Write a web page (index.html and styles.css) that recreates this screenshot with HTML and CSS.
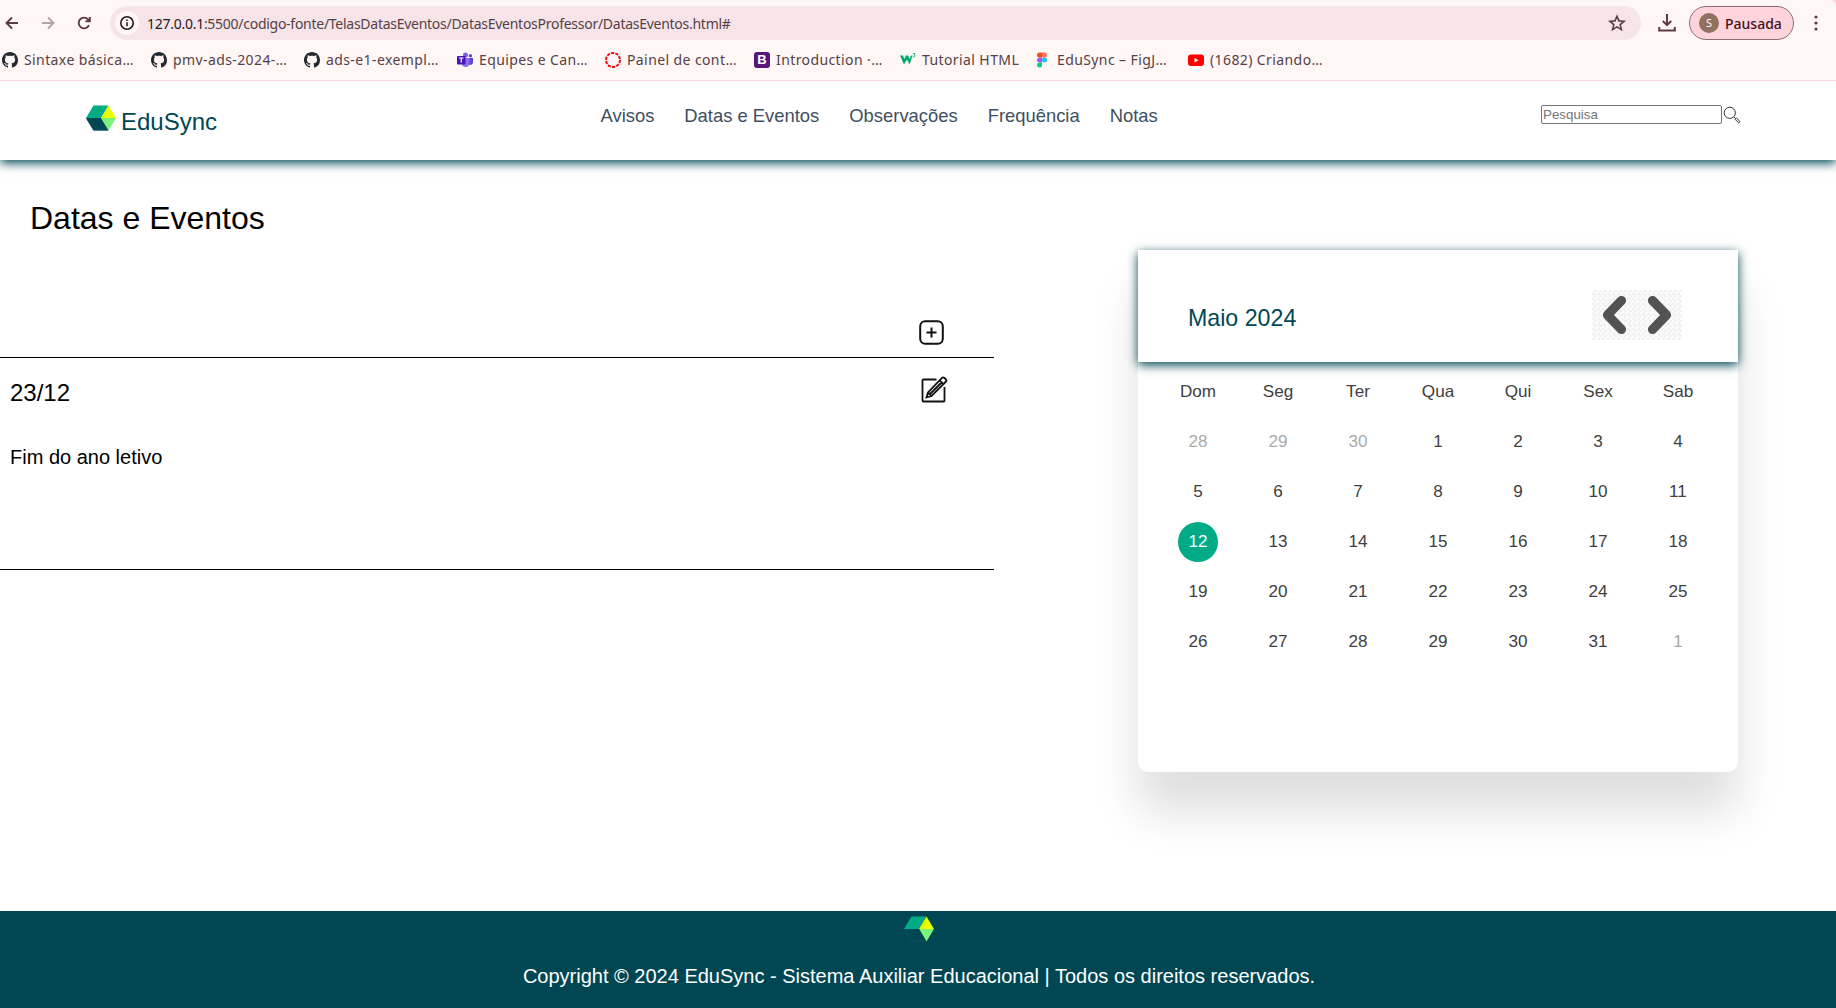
FILE: index.html
```html
<!DOCTYPE html>
<html lang="pt-BR">
<head>
<meta charset="utf-8">
<title>EduSync</title>
<link rel="stylesheet" href="styles.css">
</head>
<body>
<svg class="defs" width="0" height="0">
  <symbol id="logo" viewBox="0 0 30 26">
    <path d="M0 13 7.5.5h15L15 13z" fill="#00ab86"/>
    <path d="M22.5.5 30 13H15z" fill="#e9ff00"/>
    <path d="M15 13h15l-7.5 12.5z" fill="#7af57a"/>
    <path d="M0 13h15l7.5 12.500H7.500z" fill="#004753"/>
    <path class="logo-edge" d="M.5 13.500 7.500 25h14.500"/>
  </symbol>
  <symbol id="github" viewBox="0 0 16 16">
    <path fill="#24292f" d="M8 0C3.580 0 0 3.580 0 8c0 3.540 2.290 6.530 5.470 7.590.4.070.55-.17.55-.38 0-.19-.01-.82-.01-1.490-2.010.37-2.530-.49-2.690-.94-.09-.23-.48-.94-.82-1.130-.28-.15-.68-.52-.01-.53.63-.01 1.080.58 1.230.82.72 1.210 1.870.87 2.330.66.07-.52.28-.87.51-1.070-1.780-.2-3.640-.89-3.640-3.950 0-.87.31-1.590.82-2.150-.08-.2-.36-1.020.08-2.120 0 0 .67-.21 2.200.82.64-.18 1.320-.27 2-.27s1.360.09 2 .27c1.530-1.040 2.200-.82 2.200-.82.44 1.100.16 1.920.08 2.120.51.56.82 1.270.82 2.150 0 3.070-1.870 3.750-3.650 3.950.29.25.54.73.54 1.480 0 1.070-.01 1.930-.01 2.200 0 .21.15.46.55.38A8.010 8.010 0 0 0 16 8c0-4.420-3.580-8-8-8z"/>
  </symbol>
</svg>

<div class="browser">
  <div class="toolbar">
    <div class="nav-buttons">
      <svg width="16" height="16" viewBox="0 0 16 16"><path d="M14 8H3M8 2.500 2.500 8 8 13.500"/></svg>
      <svg class="off" width="16" height="16" viewBox="0 0 16 16"><path d="M2 8h11M8 2.500 13.500 8 8 13.500"/></svg>
      <svg width="16" height="16" viewBox="0 0 16 16"><path d="M13 10.200A5.400 5.400 0 1 1 12.200 4.500L13.500 6M13.800 2v4.300H9.500"/></svg>
    </div>
    <div class="address">
      <span class="info"><svg width="16" height="16" viewBox="0 0 16 16"><circle cx="8" cy="8" r="6.200"/><path d="M8 7.200v4M8 4.500v1.500"/></svg></span>
      <span class="url"><b>127.0.0.1</b>:5500/codigo-fonte/TelasDatasEventos/DatasEventosProfessor/DatasEventos.html#</span>
      <svg class="star" width="18" height="18" viewBox="0 0 18 18"><path d="m9 2.200 2 4.700 5 .4-3.800 3.300 1.200 5L9 12.900l-4.400 2.700 1.200-5L2 7.300l5-.4z"/></svg>
    </div>
    <svg class="download" width="18" height="18" viewBox="0 0 18 18"><path d="M9 0v11M4.800 7 9 11.200 13.200 7M1.200 13v3.500h15.600V13"/></svg>
    <div class="profile"><span class="avatar">S</span><span class="paused">Pausada</span></div>
    <svg class="dots" width="4" height="16" viewBox="0 0 4 16"><circle cx="2" cy="2" r="1.600"/><circle cx="2" cy="8" r="1.600"/><circle cx="2" cy="14" r="1.600"/></svg>
  </div>
  <div class="bookmarks">
    <div class="bm"><svg width="16" height="16"><use href="#github"/></svg><span>Sintaxe básica…</span></div>
    <div class="bm"><svg width="16" height="16"><use href="#github"/></svg><span>pmv-ads-2024-…</span></div>
    <div class="bm"><svg width="16" height="16"><use href="#github"/></svg><span>ads-e1-exempl…</span></div>
    <div class="bm"><svg width="16" height="16" viewBox="0 0 16 16"><circle cx="8.500" cy="3" r="2.500" fill="#7b61ee"/><circle cx="13.500" cy="3.800" r="1.700" fill="#5b4bd0"/><path d="M11.500 6H16v4.500a2.500 2.500 0 0 1-4.500 1.500z" fill="#5b4bd0"/><path d="M5 6h7.500v5a4 4 0 0 1-7.500 2z" fill="#8b6cf5"/><rect y="4" width="8.500" height="8.500" rx="1" fill="#4b14b5"/><path d="M2 6h4.500M4.250 6v4.500" stroke="#fff" stroke-width="1.200"/></svg><span>Equipes e Can…</span></div>
    <div class="bm"><svg width="16" height="16" viewBox="0 0 16 16"><circle cx="8" cy="8" r="7" fill="none" stroke="#f20d0d" stroke-width="2" stroke-dasharray="3.200 1.200"/></svg><span>Painel de cont…</span></div>
    <div class="bm"><span class="bootstrap">B</span><span>Introduction ·…</span></div>
    <div class="bm"><svg width="16" height="16" viewBox="0 0 16 16"><path d="M0 3.500h3l1.300 3.400 1.600-3.400h2.300l1.500 3.400 1.200-3.400h1.600L9.700 12.500 6.900 7.800 4 12.500z" fill="#04aa6d"/><path d="M13 1.500h2l-1 1.500q1.800.2.500 1.800-1 .6-1.700-.2" fill="none" stroke="#04aa6d" stroke-width=".8"/></svg><span>Tutorial HTML</span></div>
    <div class="bm figma"><svg width="16" height="16" viewBox="0 0 16 16"><path d="M8 .5H5.500a2.500 2.500 0 0 0 0 5H8z" fill="#f24e1e"/><path d="M8 .5h2.500a2.500 2.500 0 0 1 0 5H8z" fill="#ff7262"/><path d="M8 5.500H5.500a2.500 2.500 0 0 0 0 5H8z" fill="#a259ff"/><circle cx="10.500" cy="8" r="2.500" fill="#1abcfe"/><path d="M8 10.500H5.500A2.500 2.500 0 1 0 8 13z" fill="#0acf83"/></svg><span>EduSync – FigJ…</span></div>
    <div class="bm"><svg width="16" height="16" viewBox="0 0 16 16"><rect y="2.500" width="16" height="11.500" rx="3" fill="#f00"/><path d="m6.500 6 4 2.300-4 2.300z" fill="#fff"/></svg><span>(1682) Criando…</span></div>
  </div>
</div>

<header class="header">
  <a class="brand"><svg width="30" height="26"><use href="#logo"/></svg><span>EduSync</span></a>
  <nav class="menu"><a>Avisos</a><a>Datas e Eventos</a><a>Observações</a><a>Frequência</a><a>Notas</a></nav>
  <div class="search">
    <input type="text" placeholder="Pesquisa">
    <svg width="18" height="18" viewBox="0 0 18 18"><circle cx="6.800" cy="6.800" r="5.600"/><path d="m11 11 1.500 1.500M12 13.200l1.400-1.400 3.600 3.800-1.300 1.300z"/></svg>
  </div>
</header>

<main class="main">
  <section class="events">
    <h1>Datas e Eventos</h1>
    <div class="add"><svg width="26" height="26" viewBox="0 0 26 26"><rect x="1.200" y="1.200" width="22.600" height="22.600" rx="5"/><path d="M12.500 7.500v10M7.500 12.500h10"/></svg></div>
    <article class="event">
      <div class="event-head"><h2>23/12</h2>
        <svg width="27" height="27" viewBox="0 0 27 27"><path d="M15.500 3.500H2.500q-1 0-1 1v20q0 1 1 1h20q1 0 1-1V11"/><path d="m7 16.500-1.500 5 5-1.500L25 5.500q1-1-.5-2.500l-1-1q-1.500-1.200-2.500-.2zM7 16.500l3.500 3.500M18.500 4.200l4 4M9 18 21 6"/></svg></div>
      <p>Fim do ano letivo</p>
    </article>
  </section>

  <section class="calendar">
    <div class="cal-head">
      <p>Maio 2024</p>
      <div class="arrows">
        <svg width="45" height="50" viewBox="0 0 45 50"><path d="M29.500 10.500 15.500 25l14 14.500"/></svg>
        <svg width="45" height="50" viewBox="0 0 45 50"><path d="M15.500 10.500 29.500 25l-14 14.500"/></svg>
      </div>
    </div>
    <ul class="grid">
      <li>Dom</li><li>Seg</li><li>Ter</li><li>Qua</li><li>Qui</li><li>Sex</li><li>Sab</li>
      <li class="out">28</li><li class="out">29</li><li class="out">30</li><li>1</li><li>2</li><li>3</li><li>4</li>
      <li>5</li><li>6</li><li>7</li><li>8</li><li>9</li><li>10</li><li>11</li>
      <li class="today"><span>12</span></li><li>13</li><li>14</li><li>15</li><li>16</li><li>17</li><li>18</li>
      <li>19</li><li>20</li><li>21</li><li>22</li><li>23</li><li>24</li><li>25</li>
      <li>26</li><li>27</li><li>28</li><li>29</li><li>30</li><li>31</li><li class="out">1</li>
    </ul>
  </section>
</main>

<footer class="footer">
  <svg width="30" height="26"><use href="#logo"/></svg>
  <p>Copyright © 2024 EduSync - Sistema Auxiliar Educacional | Todos os direitos reservados.</p>
</footer>
</body>
</html>
```
FILE: styles.css
```css
* { box-sizing: border-box; margin: 0; padding: 0; }
body {
  height: 1008px;
  display: flex;
  flex-direction: column;
  overflow: hidden;
  background: #fff;
  font-family: "Liberation Sans", Arial, sans-serif;
}
svg { display: block; flex: none; }
.defs { position: absolute; }

/* Browser chrome */
.browser {
  height: 81px;
  flex: none;
  z-index: 2;
  background: linear-gradient(#ffd3dc, #ffd3dc) top right / 8px 8px no-repeat;
  border-bottom: 1px solid #f9d9dc;
  font-family: "Noto Sans", "Open Sans", sans-serif;
  font-size: 14px;
  color: #554145;
}
.toolbar {
  height: 40px;
  display: flex;
  align-items: center;
  padding: 6px 18px 0 4px;
  background: #fff7f6;
  border-top-right-radius: 6px;
}
.nav-buttons { display: flex; gap: 20px; width: 106px; }
.nav-buttons svg { fill: none; stroke: #5e3a42; stroke-width: 1.9; }
.nav-buttons .off { stroke: #b5a3a5; }
.address {
  width: 1531px;
  height: 34px;
  display: flex;
  align-items: center;
  padding: 0 15px 0 5px;
  border-radius: 17px;
  background: #f6e4e9;
}
.info {
  display: grid;
  place-items: center;
  width: 24px;
  height: 24px;
  margin-right: 8px;
  border-radius: 50%;
  background: #fff7f6;
}
.info svg { fill: none; stroke: #2b1a1d; stroke-width: 1.6; }
.url { flex: 1; white-space: nowrap; letter-spacing: -.27px; }
.url b { font-weight: 400; color: #24191b; }
.star { fill: none; stroke: #554145; stroke-width: 1.6; }
.download { margin-left: 17px; fill: none; stroke: #5e3a42; stroke-width: 2; }
.profile {
  width: 105px;
  height: 34px;
  display: flex;
  align-items: center;
  gap: 6px;
  margin: 0 20px 0 13px;
  padding-left: 9px;
  border: 1px solid #8c6d73;
  border-radius: 17px;
  background: #ffd3dc;
  color: #43101d;
}
.avatar {
  width: 20px;
  height: 20px;
  border-radius: 50%;
  background: #936f60;
  color: #fff;
  font-size: 11px;
  line-height: 20px;
  text-align: center;
}
.paused { font-weight: 500; }
.dots { fill: #5e3a42; }
.bookmarks {
  height: 40px;
  display: grid;
  grid-template-columns: 149px 153px 153px 148px 149px 146px 134px 154px 150px;
  align-items: center;
  padding: 0 0 1px 2px;
  background: #fff7f6;
}
.bm { display: flex; align-items: center; gap: 6px; white-space: nowrap; letter-spacing: .4px; }
.figma { gap: 7px; }
.bootstrap {
  width: 16px;
  height: 16px;
  border-radius: 3px;
  background: #56167a;
  color: #fff;
  font: bold 13px/16px "Liberation Sans", sans-serif;
  letter-spacing: 0;
  text-align: center;
}

/* Site header */
.header {
  height: 79px;
  flex: none;
  display: grid;
  grid-template-columns: 514.5px 1fr 295px;
  padding-left: 86px;
  background: #fff;
  box-shadow: 0 3px 10px #004753;
  z-index: 1;
}
.brand { display: flex; gap: 5px; padding-top: 24px; color: #004753; font-size: 24px; line-height: 34px; }
.menu { display: flex; gap: 30px; padding-top: 24px; color: #404f5f; font-size: 18.4px; line-height: 22px; }
.search { display: flex; gap: 1px; padding-top: 24px; }
.search input {
  width: 181px;
  height: 19px;
  padding: 0 1px;
  border: 1px solid #767676;
  border-radius: 2px;
  font: 13.333px "Liberation Sans", sans-serif;
}
.search input::placeholder { color: #757575; }
.search svg { margin-top: 1px; fill: none; stroke: #333; stroke-width: 1; }

/* Main content */
.main { flex: 1; display: flex; justify-content: space-between; padding-right: 98px; }
.events { width: 994px; }
.events h1 { padding: 40px 0 0 30px; font-size: 32px; font-weight: 400; line-height: 36px; }
.add { display: flex; justify-content: flex-end; height: 122px; padding: 84px 49px 0 0; border-bottom: 1px solid #000; }
.add svg, .event-head svg { fill: none; stroke: #111; stroke-width: 2; }
.event { height: 212px; padding: 18px 46px 0 10px; border-bottom: 1px solid #000; }
.event-head { display: flex; justify-content: space-between; }
.event-head svg { stroke-width: 1.8; }
.event h2 { font-size: 24px; font-weight: 400; line-height: 33px; }
.event p { margin-top: 36px; font-size: 20px; line-height: 24px; }

/* Calendar card */
.calendar {
  width: 600px;
  height: 522px;
  margin-top: 90px;
  border-radius: 0 0 10px 10px;
  background: #fff;
  box-shadow: 0 40px 45px rgba(0, 0, 0, .13);
}
.cal-head {
  height: 112px;
  display: flex;
  justify-content: space-between;
  padding: 40px 56px 0 50px;
  box-shadow: 0 3px 10px #004753;
}
.cal-head p { color: #004753; font-size: 23.2px; line-height: 27px; margin-top: 15px; }
.arrows { display: flex; }
.arrows svg {
  background: repeating-conic-gradient(#f1f1f1 0 25%, #fcfcfc 0 50%) 0 0 / 5px 5px;
  fill: none;
  stroke: #535353;
  stroke-width: 9.2;
  stroke-linecap: round;
  stroke-linejoin: round;
}
.grid {
  display: grid;
  grid-template-columns: repeat(7, 80px);
  grid-auto-rows: 50px;
  padding: 5px 20px 0;
  list-style: none;
  color: #404040;
  font-size: 17.12px;
  line-height: 50px;
  text-align: center;
}
.out { color: #aaa; }
.today { display: grid; place-items: center; color: #fff; }
.today span { width: 40px; height: 40px; border-radius: 50%; background: #00ab86; line-height: 40px; }

/* Footer */
.footer {
  height: 97px;
  flex: none;
  display: flex;
  flex-direction: column;
  align-items: center;
  padding: 5px 0 0 2px;
  background: #004753;
  color: #fff;
  font-size: 20px;
  line-height: 24px;
}
.footer p { margin-top: 22px; }
.logo-edge { fill: none; stroke: #0b5864; stroke-width: .8; }
```
